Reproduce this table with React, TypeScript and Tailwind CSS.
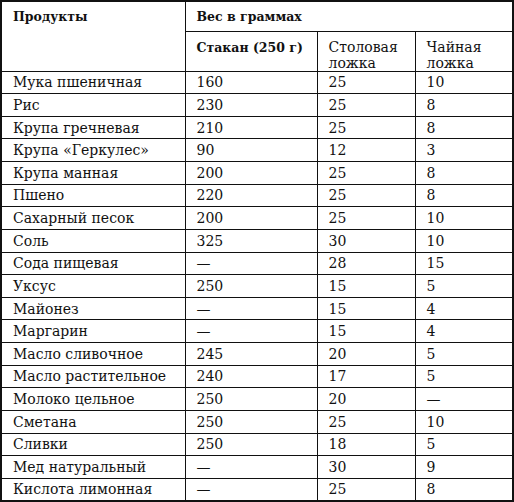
const rows: [string, string, string, string][] = [
  ["Мука пшеничная", "160", "25", "10"],
  ["Рис", "230", "25", "8"],
  ["Крупа гречневая", "210", "25", "8"],
  ["Крупа «Геркулес»", "90", "12", "3"],
  ["Крупа манная", "200", "25", "8"],
  ["Пшено", "220", "25", "8"],
  ["Сахарный песок", "200", "25", "10"],
  ["Соль", "325", "30", "10"],
  ["Сода пищевая", "—", "28", "15"],
  ["Уксус", "250", "15", "5"],
  ["Майонез", "—", "15", "4"],
  ["Маргарин", "—", "15", "4"],
  ["Масло сливочное", "245", "20", "5"],
  ["Масло растительное", "240", "17", "5"],
  ["Молоко цельное", "250", "20", "—"],
  ["Сметана", "250", "25", "10"],
  ["Сливки", "250", "18", "5"],
  ["Мед натуральный", "—", "30", "9"],
  ["Кислота лимонная", "—", "25", "8"],
];

const cell = "border border-[#111] pl-[11px] pr-1 align-middle";
const head = "border border-[#111] pl-[11px] pr-0 align-top font-bold text-[12.5px] whitespace-nowrap";

export default function App() {
  return (
    <div className="w-[514px] h-[502px] bg-white text-[#111] font-['DejaVu_Serif',serif] text-[14px] leading-[16px]">
      <table className="w-[513px] table-fixed border-collapse border-2 border-[#111]">
        <colgroup>
          <col className="w-[184px]" />
          <col className="w-[132px]" />
          <col className="w-[98px]" />
          <col className="w-[98px]" />
        </colgroup>
        <thead>
          <tr className="h-[30px]">
            <th rowSpan={2} className={head + " text-left pt-[7px]"}>
              Продукты
            </th>
            <th colSpan={3} className={head + " text-left pt-[7px]"}>
              Вес в граммах
            </th>
          </tr>
          <tr className="h-[40px]">
            <th className={head + " text-left pt-[8px]"}>Стакан (250 г)</th>
            <th className={cell + " text-left align-top font-normal pt-[7px]"}>
              Столовая
              <br />
              ложка
            </th>
            <th className={cell + " text-left align-top font-normal pt-[7px]"}>
              Чайная
              <br />
              ложка
            </th>
          </tr>
        </thead>
        <tbody>
          {rows.map((r) => (
            <tr key={r[0]} className="h-[22.63px]">
              <td className={cell}>{r[0]}</td>
              <td className={cell}>{r[1]}</td>
              <td className={cell}>{r[2]}</td>
              <td className={cell}>{r[3]}</td>
            </tr>
          ))}
        </tbody>
      </table>
    </div>
  );
}
